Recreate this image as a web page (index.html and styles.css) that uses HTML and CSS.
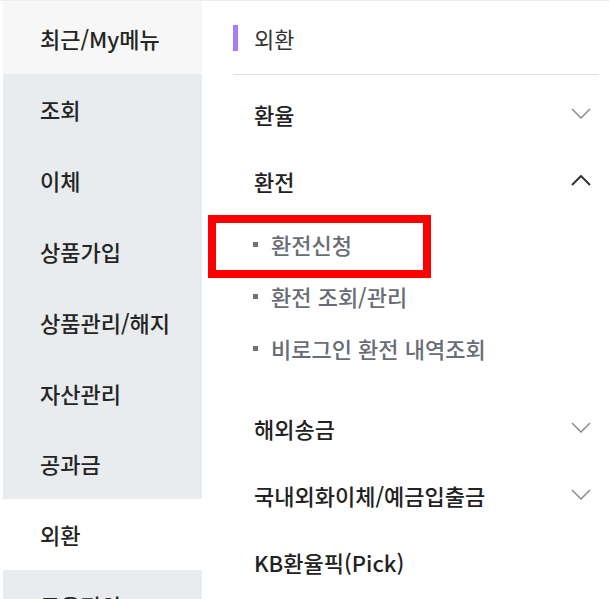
FILE: index.html
```html
<!DOCTYPE html>
<html lang="ko">
<head>
<meta charset="utf-8">
<title>외환 메뉴</title>
<link rel="stylesheet" href="styles.css">
</head>
<body>
<div class="page">
  <nav class="side">
    <div class="side-item side-recent">최근/My메뉴</div>
    <div class="side-item">조회</div>
    <div class="side-item">이체</div>
    <div class="side-item">상품가입</div>
    <div class="side-item">상품관리/해지</div>
    <div class="side-item">자산관리</div>
    <div class="side-item">공과금</div>
    <div class="side-item side-active">외환</div>
    <div class="side-item">금융편의</div>
  </nav>
  <main class="panel">
    <div class="panel-head"><span class="head-bar"></span><span class="head-title">외환</span></div>
    <ul class="menu">
      <li class="menu-item"><span>환율</span>
        <svg class="chev chev-down" width="20" height="11" viewBox="0 0 20 11"><path d="M1 1 L10 10 L19 1" fill="none" stroke="#8a9199" stroke-width="1.6"/></svg>
      </li>
      <li class="menu-item"><span>환전</span>
        <svg class="chev chev-up" width="20" height="11" viewBox="0 0 20 11"><path d="M1 10 L10 1 L19 10" fill="none" stroke="#333333" stroke-width="2"/></svg>
      </li>
      <li class="sub">
        <ul class="sub-list">
          <li class="sub-item"><span class="dot"></span>환전신청</li>
          <li class="sub-item"><span class="dot"></span>환전 조회/관리</li>
          <li class="sub-item"><span class="dot"></span>비로그인 환전 내역조회</li>
        </ul>
      </li>
      <li class="menu-item"><span>해외송금</span>
        <svg class="chev chev-down" width="20" height="11" viewBox="0 0 20 11"><path d="M1 1 L10 10 L19 1" fill="none" stroke="#8a9199" stroke-width="1.6"/></svg>
      </li>
      <li class="menu-item"><span>국내외화이체/예금입출금</span>
        <svg class="chev chev-down" width="20" height="11" viewBox="0 0 20 11"><path d="M1 1 L10 10 L19 1" fill="none" stroke="#8a9199" stroke-width="1.6"/></svg>
      </li>
      <li class="menu-item"><span>KB환율픽(Pick)</span></li>
    </ul>
  </main>
  <div class="highlight"></div>
</div>
</body>
</html>
```
FILE: styles.css
```css
* { box-sizing: border-box; }
html, body { margin: 0; padding: 0; background: #ffffff; }
body {
  font-family: "Noto Sans CJK KR", "Noto Sans", sans-serif;
  color: #222222;
  overflow: hidden;
}
.page {
  position: relative;
  display: flex;
  width: 609px;
  height: 599px;
  border-top: 1px solid #eceff2;
  overflow: hidden;
}
.side {
  width: 202px;
  flex: none;
  padding-left: 3px;
  background: #ffffff;
  display: flex;
  flex-direction: column;
}
.side-item {
  flex: none;
  height: 70.8px;
  display: flex;
  align-items: center;
  padding-left: 37px;
  font-size: 22px;
  font-weight: 500;
  color: #252525;
  background: #e9ecef;
}
.side-recent { height: 73px; background: #f7f7f7; }
.side-active { background: #ffffff; }

.panel {
  flex: 1;
  padding: 0 10px 0 31px;
}
.panel-head {
  height: 74px;
  display: flex;
  align-items: center;
  border-bottom: 1px solid #dcdfe3;
}
.head-bar {
  width: 5px;
  height: 26px;
  background: #a57ef3;
  margin-right: 16px;
}
.head-title {
  font-size: 22px;
  font-weight: 400;
  color: #333333;
}
.menu {
  list-style: none;
  margin: 0;
  padding: 5px 0 0 0;
}
.menu-item {
  height: 67px;
  display: flex;
  align-items: center;
  justify-content: space-between;
  padding: 0 8px 0 21px;
  font-size: 22px;
  font-weight: 500;
  color: #222222;
}
.chev { display: block; }
.sub { padding: 4px 0 20px 0; }
.sub-list { list-style: none; margin: 0; padding: 0; }
.sub-item {
  height: 52px;
  display: flex;
  align-items: center;
  padding-left: 20px;
  font-size: 22px;
  font-weight: 500;
  color: #686d76;
}
.dot {
  width: 5px;
  height: 5px;
  background: #6d727b;
  margin-right: 13px;
}
.highlight {
  position: absolute;
  left: 208px;
  top: 214px;
  width: 223px;
  height: 63px;
  border: 8px solid #ff0000;
}
```
